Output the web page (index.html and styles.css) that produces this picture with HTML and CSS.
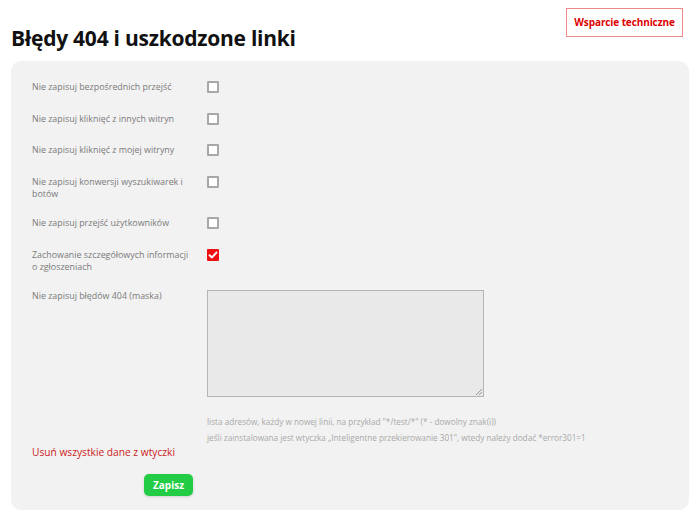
FILE: index.html
```html
<!DOCTYPE html>
<html lang="pl">
<head>
<meta charset="utf-8">
<title>Błędy 404 i uszkodzone linki</title>
<link rel="stylesheet" href="styles.css">
</head>
<body>
<div class="page">
  <header class="top">
    <h1 class="title">Błędy 404 i uszkodzone linki</h1>
    <a class="support" href="#">Wsparcie techniczne</a>
  </header>
  <form class="panel">
    <div class="row">
      <span class="label">Nie zapisuj bezpośrednich przejść</span>
      <span class="check"></span>
    </div>
    <div class="row">
      <span class="label">Nie zapisuj kliknięć z innych witryn</span>
      <span class="check"></span>
    </div>
    <div class="row">
      <span class="label">Nie zapisuj kliknięć z mojej witryny</span>
      <span class="check"></span>
    </div>
    <div class="row">
      <span class="label">Nie zapisuj konwersji wyszukiwarek i botów</span>
      <span class="check"></span>
    </div>
    <div class="row">
      <span class="label">Nie zapisuj przejść użytkowników</span>
      <span class="check"></span>
    </div>
    <div class="row">
      <span class="label">Zachowanie szczegółowych informacji o zgłoszeniach</span>
      <span class="check checked"><svg viewBox="0 0 12 12" width="12" height="12"><path d="M2.6 6.2 L5 8.4 L9.4 3.6" fill="none" stroke="#fff" stroke-width="2" stroke-linecap="round" stroke-linejoin="round"/></svg></span>
    </div>
    <div class="row row-area">
      <span class="label">Nie zapisuj błędów 404 (maska)</span>
      <div class="area-col">
        <div class="area"><span class="grip"></span></div>
        <p class="help">lista adresów, każdy w nowej linii, na przykład "*/test/*" (* - dowolny znak(i))<br>jeśli zainstalowana jest wtyczka „Inteligentne przekierowanie 301", wtedy należy dodać *error301=1</p>
      </div>
    </div>
    <a class="remove" href="#">Usuń wszystkie dane z wtyczki</a>
    <div class="actions"><span class="save">Zapisz</span></div>
  </form>
</div>
</body>
</html>
```
FILE: styles.css
```css
html, body {
  margin: 0;
  padding: 0;
  background: #fff;
}
body {
  font-family: "Open Sans", "Noto Sans", sans-serif;
  width: 700px;
  height: 516px;
  overflow: hidden;
}
.page {
  padding: 8px 17px 0 11px;
}
.top {
  display: flex;
  justify-content: space-between;
  align-items: flex-start;
  height: 53px;
}
.title {
  margin: 15px 0 0 0;
  font-size: 21px;
  line-height: 30px;
  font-weight: 700;
  color: #111;
  letter-spacing: -0.25px;
}
.support {
  display: block;
  box-sizing: border-box;
  width: 117px;
  height: 29px;
  border: 1px solid #ee8a8a;
  color: #dd0000;
  font-size: 10px;
  font-weight: 700;
  line-height: 27px;
  text-align: center;
  text-decoration: none;
  letter-spacing: -0.1px;
}
.panel {
  display: block;
  box-sizing: border-box;
  width: 678px;
  height: 449px;
  background: #f2f2f2;
  border-radius: 10px;
  padding: 20px 21px 0 21px;
}
.row {
  display: grid;
  grid-template-columns: 175px 1fr;
  margin-bottom: 17.5px;
}
.label {
  font-size: 8.9px;
  line-height: 12px;
  color: #7a7a7a;
  padding-right: 18px;
}
.check {
  display: block;
  box-sizing: border-box;
  width: 12px;
  height: 12px;
  margin-bottom: 2px;
  border: 2px solid #a8a8a8;
  background: #fff;
  border-radius: 1px;
}
.check.checked {
  border: none;
  background: #ee1111;
}
.check svg {
  display: block;
}
.row-area {
  margin-bottom: 0;
}
.area {
  position: relative;
  box-sizing: border-box;
  width: 277px;
  height: 107px;
  border: 1px solid #b5b5b5;
  background: #e9e9e9;
}
.grip {
  position: absolute;
  right: 1px;
  bottom: 1px;
  width: 6px;
  height: 6px;
  background: linear-gradient(135deg, transparent 0 45%, #999 45% 55%, transparent 55% 70%, #999 70% 80%, transparent 80%);
}
.help {
  margin: 17px 0 0 0;
  font-size: 8.2px;
  line-height: 16px;
  color: #a9a9a9;
}
.remove {
  display: block;
  margin-top: -2px;
  font-size: 10.2px;
  line-height: 16px;
  color: #cc2222;
  text-decoration: none;
}
.actions {
  margin-top: 12px;
  padding-left: 112px;
}
.save {
  display: inline-block;
  box-sizing: border-box;
  width: 49px;
  height: 22px;
  background: #22cc44;
  color: #fff;
  font-size: 10px;
  font-weight: 700;
  line-height: 22px;
  text-align: center;
  border-radius: 5px;
  box-shadow: 0 1px 3px rgba(0,0,0,0.15);
}
```
